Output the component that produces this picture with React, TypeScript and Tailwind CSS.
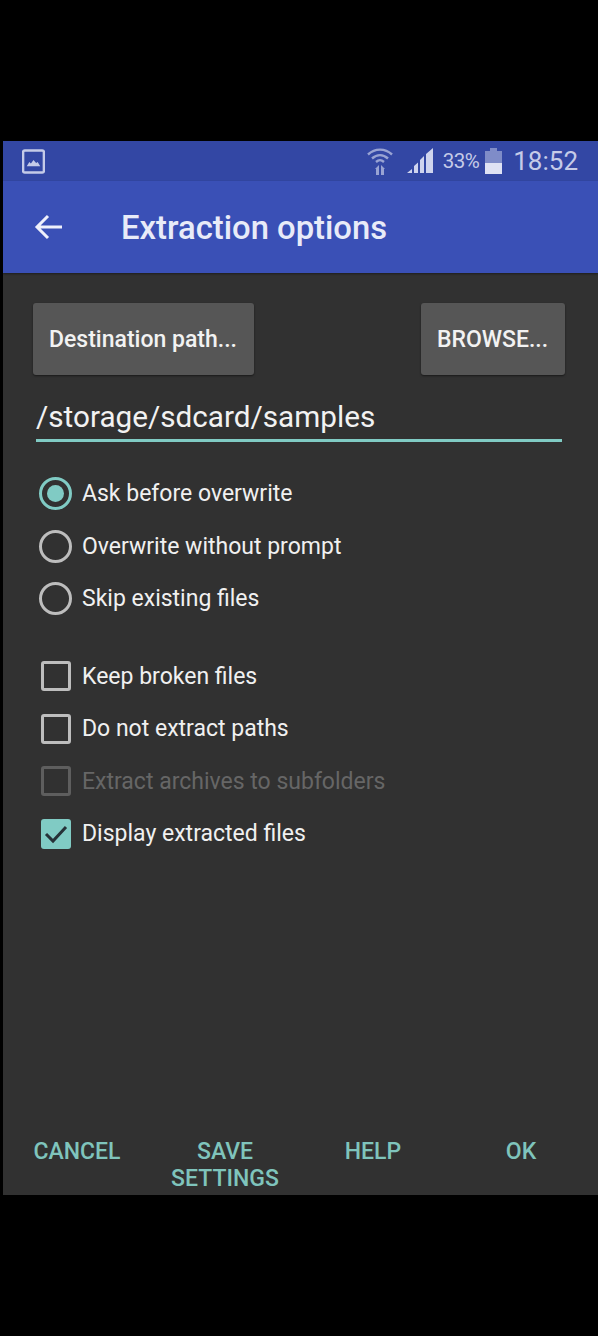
const radios = [
  { label: 'Ask before overwrite', checked: true },
  { label: 'Overwrite without prompt', checked: false },
  { label: 'Skip existing files', checked: false },
];

const checks = [
  { label: 'Keep broken files', checked: false, disabled: false },
  { label: 'Do not extract paths', checked: false, disabled: false },
  { label: 'Extract archives to subfolders', checked: false, disabled: true },
  { label: 'Display extracted files', checked: true, disabled: false },
];

function StatusBar() {
  return (
    <div className="h-[40px] bg-[#3347a4] flex items-center pl-[19px] pr-[20px] text-[#c5cbe8]">
      <svg width="23" height="25" viewBox="0 0 22 24" fill="none">
        <rect x="1" y="1.5" width="20" height="21" rx="1.5" stroke="#c5cbe8" strokeWidth="2.4" />
        <path d="M4.500 16.500l2.500-4 1.500 1.500 2.500-3.500 2.500 3 1.500-1 2.500 4z" fill="#c5cbe8" />
      </svg>
      <div className="ml-auto flex items-center">
        <svg width="28" height="30" viewBox="0 0 28 30" fill="none" className="opacity-70">
          <path d="M2 8.500C9 2 19 2 26 8.500" stroke="#c5cbe8" strokeWidth="2.400" />
          <path d="M6 12.500c5-4.500 11-4.500 16 0" stroke="#c5cbe8" strokeWidth="2.400" />
          <path d="M10 16c3-2.500 5-2.500 8 0" stroke="#c5cbe8" strokeWidth="2.400" />
          <path d="M9 23l4-4v10h-3v-6zM15 19l4 4h-1v6h-3z" fill="#c5cbe8" />
        </svg>
        <svg width="28" height="26" viewBox="0 0 28 26" className="ml-[13px]">
          <path d="M0 25l5-4v4zM7 25v-7l4-3.500v10.500zM13 25V12l4-4v17zM19 25V6l7-6v25z" fill="#cfd4ee" />
        </svg>
        <span className="ml-[8px] text-[20.500px] leading-none tracking-[-0.5px]">33%</span>
        <div className="ml-[6px] w-[17px] h-[26px] flex flex-col items-center">
          <div className="w-[7px] h-[3px] bg-[#7f8cc8]" />
          <div className="w-full h-[12px] bg-[#7f8cc8]" />
          <div className="w-full h-[11px] bg-[#dfe2f4]" />
        </div>
        <span className="ml-[11px] text-[26px] leading-none">18:52</span>
      </div>
    </div>
  );
}

function Toolbar() {
  return (
    <div className="h-[92px] bg-[#3a50b6] flex items-center pl-[31px] shadow-[0_1px_2px_rgba(0,0,0,0.4)]">
      <svg width="28" height="28" viewBox="0 0 28 28" fill="none" stroke="#eef0fb" strokeWidth="3">
        <path d="M28 14H3M14 3L3 14l11 11" />
      </svg>
      <h1 className="ml-[59px] mt-[3px] text-[32.800px] leading-none font-medium text-[#e8ebf8]">Extraction options</h1>
    </div>
  );
}

function GrayButton({ label, className }: { label: string; className: string }) {
  return (
    <div className={`h-[72px] pt-[3px] pr-[1px] bg-[#565656] rounded-[3px] shadow-[0_1px_2px_rgba(0,0,0,0.5)] flex items-center justify-center text-[23px] font-medium text-[#f2f2f2] ${className}`}>
      {label}
    </div>
  );
}

function Radio({ label, checked }: { label: string; checked: boolean }) {
  return (
    <div className="h-[52.500px] flex items-center">
      <div className={`w-[33px] h-[33px] mb-[2px] rounded-full border-[3px] flex items-center justify-center ${checked ? 'border-[#80cbc4]' : 'border-[#bdbdbd]'}`}>
        {checked && <div className="w-[17px] h-[17px] rounded-full bg-[#80cbc4]" />}
      </div>
      <span className="ml-[10px] text-[23px] text-[#f0f0f0]">{label}</span>
    </div>
  );
}

function Check({ label, checked, disabled }: { label: string; checked: boolean; disabled: boolean }) {
  const box = checked
    ? 'bg-[#80cbc4]'
    : disabled
      ? 'border-[3px] border-[#5e5e5e]'
      : 'border-[3px] border-[#bdbdbd]';
  return (
    <div className="h-[52.500px] flex items-center">
      <div className="w-[33px] mb-[2px] flex justify-center">
        <div className={`w-[30px] h-[30px] rounded-[3px] flex items-center justify-center ${box}`}>
          {checked && (
            <svg width="24" height="20" viewBox="0 0 24 20" fill="none" stroke="#263238" strokeWidth="3">
              <path d="M2 10l7 7L22 3" />
            </svg>
          )}
        </div>
      </div>
      <span className={`ml-[10px] text-[23px] ${disabled ? 'text-[#666666]' : 'text-[#f0f0f0]'}`}>{label}</span>
    </div>
  );
}

export default function App() {
  return (
    <div className="w-[598px] h-[1336px] bg-black pt-[141px] pb-[141px] pl-[3px] font-['Roboto',sans-serif]">
      <div className="h-full bg-[#313131] flex flex-col">
        <StatusBar />
        <Toolbar />

        <div className="flex flex-col flex-1 pt-[30px] pl-[30px] pr-[33px]">
          <div className="flex justify-between">
            <GrayButton label="Destination path..." className="w-[221px]" />
            <GrayButton label="BROWSE..." className="w-[144px]" />
          </div>

          <div className="mt-[20px] ml-[3px] mr-[3px] h-[47px] border-b-[3px] border-[#80cbc4] text-[29.700px] leading-[43px] text-[#f2f2f2]">
            /storage/sdcard/samples
          </div>

          <div className="mt-[26.400px] ml-[6px]">
            {radios.map((r) => (
              <Radio key={r.label} label={r.label} checked={r.checked} />
            ))}
          </div>

          <div className="mt-[25px] ml-[6px]">
            {checks.map((c) => (
              <Check key={c.label} label={c.label} checked={c.checked} disabled={c.disabled} />
            ))}
          </div>

          <div className="mt-auto mb-[3px] -ml-[30px] -mr-[33px] grid grid-cols-4 pr-[3px] text-[23px] leading-[27px] font-medium text-[#7fc4bc] text-center">
            <div>CANCEL</div>
            <div>SAVE<br />SETTINGS</div>
            <div>HELP</div>
            <div>OK</div>
          </div>
        </div>
      </div>
    </div>
  );
}
